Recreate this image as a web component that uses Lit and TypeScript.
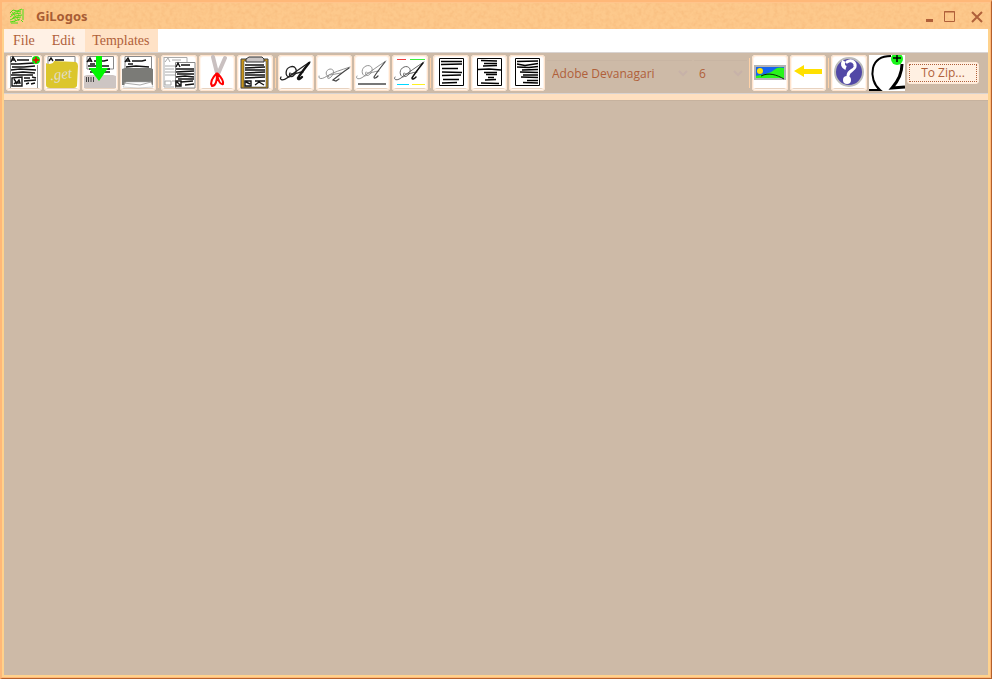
import { LitElement, html, css, svg, nothing } from "lit";
import { customElement, property } from "lit/decorators.js";

const CALLIGRAPHY = svg`
  <path class="thin" d="M3 22C1 25 5 26 9 23C16 18 24 12 32 7"/>
  <path class="thin" d="M11 22C7 21 7 14 12 12C17 10 20 15 17 19C14 23 10 22 12 18"/>
  <path class="thin" d="M13 19C17 20 20 17 25 17"/>
  <path class="stem" d="M31 8C27 13 23 18 20 23C20 25 22 24 24 22"/>`;

const PAGE_HEAD = svg`
  <path class="page" d="M5 1.500H31.500V14H5z"/>
  <path class="ink" d="M5 7L8 3L10 7M6 6H10M12 6H22L26 5M8 9L13 9"/>`;

const ICONS: Record<string, unknown> = {
  create: svg`
    <path class="white" d="M2 1H34V33H2z"/>
    <path class="hair" d="M4.500 33V1.500H26M31.500 10V33"/>
    <path class="ink" d="M5 7L7 2L10 7M6 5H9M11 5L23 5M5 9L12 9L28 8M6 12L18 12L29 11M5 15L14 14L30 15M6 18L17 17L29 18M5 20H27"/>
    <path class="ink" d="M6 23L16 22L16 31L6 31ZM8 24L10 27L8 29M10 29L13 25L14 28L11 28M18 23L24 23M26 22L30 23M18 26L30 25M20 29L23 28M25 29L29 28"/>
    <circle cx="30" cy="5" r="4" fill="#10e010"/><path d="M27 5H33M30 2V8" stroke="#f00000" stroke-width="1.5"/>`,
  open: svg`
    <path class="page" d="M4 1.500H31V12H4z"/>
    <path class="ink" d="M5 6L7 3L9 6M11 5H20"/>
    <path d="M2 8Q4 10 9 8L10 6L32 7Q34 8 34 11L33 31Q32 33 30 33H6Q2 33 2 30z" fill="#dcc62c"/>
    <text class="get" x="6" y="24" transform="rotate(-6 18 20)">.get</text>`,
  save: svg`
    ${PAGE_HEAD}
    <path class="ink" d="M6 11H27M7 14H28M8 17H28"/>
    <path d="M2 21L5 20H31L34 21V33H2z" fill="#cdc5c3"/>
    <path d="M4.500 22V27M6.500 22V27M9 22V27M11.500 22V27" stroke="#444"/>
    <path d="M14 1H20V13H26L17 26L7 13H14z" fill="#00f500"/>`,
  print: svg`
    ${PAGE_HEAD}
    <path class="ink" d="M6 12L16 11L29 12"/>
    <path d="M2 14L5 13H30L33 14V30H2z" fill="#7b7b77"/>
    <path d="M6 27H31L33 32Q18 34 3 32z" fill="#fff" stroke="#aaa" stroke-width=".5"/>
    <path d="M4 28L20 30L31 27" class="faint"/>`,
  copy: svg`
    <path class="faint" d="M3 2.500H26V7M3 2V32H13M4 7L7 3L9 7M11 5H20M4 11H14M4 14H13M4 17H14M4 20H14M4 26H10V30H4zM11 26H14"/>
    <path class="page" d="M14.500 7.500H34V33H14.500z"/>
    <path class="ink" d="M15 12L17 8L19 12M20 10H29M15 14H33M15 17L33 16M16 19L33 19M15 22L24 21L33 22M17 24H33M20 27L32 26M24 30L33 29M15 26L20 26V31L15 31zM16 27L19 30"/>`,
  cut: svg`
    <path d="M14 2L18 18M26 3L19 19" stroke="#c9c0c0" stroke-width="4" stroke-linecap="round" fill="none"/>
    <path d="M18 18C13 23 11 28 13 31C17 31 18 25 18 19C19 25 21 30 24 29C25 25 21 21 18 18" stroke="#f00" stroke-width="2" fill="none"/>`,
  paste: svg`
    <path d="M4 4H31V33H4z" fill="#c8951a" stroke="#444"/>
    <path d="M7 6H29V32H7z" fill="#fff" stroke="#333" stroke-width=".5"/>
    <path class="ink" d="M8 10H27M8 13L28 12M8 15H28M8 18L28 17M8 20H28M8 23L28 22M18 26H28M8 26H14V31H8zM9 27L13 29M18 30L22 27L27 30"/>
    <path d="M12 2H25L27 4V7H9V4z" fill="#c9c5c5" stroke="#333"/>`,
  bold: svg`<g class="heavy">${CALLIGRAPHY}</g>`,
  italic: svg`<g class="light" transform="translate(0 4)">
    <path class="thin" d="M3 17C2 21 7 20 11 17C18 13 25 11 34 8"/>
    <path class="thin" d="M13 18C9 17 9 11 14 10C19 10 18 15 15 18C12 21 10 19 13 16M14 16L25 14"/>
    <path class="stem" d="M33 9C27 13 22 17 17 21L20 22L23 20"/></g>`,
  underline: svg`<g class="light" transform="translate(0 -1)">${CALLIGRAPHY}</g><path d="M4 29H32" stroke="#777" stroke-width="2"/>`,
  color: svg`<g class="normal">${CALLIGRAPHY}</g>
    <path d="M5 4.500H14" stroke="#f04040"/><path d="M18 4.500H33" stroke="#40f040"/>
    <path d="M5 29.500H17" stroke="#00d8ff"/><path d="M20 29.500H33" stroke="#fff020"/>`,
  left: svg`<path class="frame" d="M6.500 3.500H30.500V30.500H6.500z"/>
    <path class="row" d="M8 6.500H29M8 9.500L29 9M9 13.500H25M9 17L29 17.500M9 20.500L28 20M10 24.500H26M9 28L24 27.500"/>`,
  center: svg`<path class="frame" d="M6.500 3.500H30.500V30.500H6.500z"/>
    <path class="row" d="M10 5.500L26 6M13 8.500H26M12 11L26 10.500M7 14.500L18 14L30 15M13 17.500H26M15 19.500H26M17 22.500H23M14 25L25 24.500M10 28L28 28.500"/>`,
  right: svg`<path class="frame" d="M6.500 3.500H30.500V30.500H6.500z"/>
    <path class="row" d="M8 6.500L29 6M8 9L16 10.500L29 8.500M8 12L20 12.500L29 11.500M13 15L29 14.500M11 17L29 17.500M14 20H29M12 22L29 22.500M18 25.500H29M14 27.500L29 28"/>`,
  image: svg`
    <path d="M3 11H33V24H3z" fill="#1464ef" stroke="#b4b4b4" stroke-width="2"/>
    <circle cx="8" cy="16" r="3" fill="#ffe600"/>
    <path d="M4 23V21C12 19 18 19 22 15C25 12 29 12 32 13V23z" fill="#29f51b"/>
    <path d="M9 21C17 17 25 20 32 24" stroke="#062506" fill="none"/>`,
  back: svg`<path d="M4 16L14 10V14H32V19H14V22z" fill="#ffe000"/>`,
  help: svg`
    <circle cx="18" cy="17" r="14" fill="#5148a6" stroke="#bbb" stroke-width="2"/>
    <path d="M16 7C20 4 25 7 24 12C23 16 17 15 17 21" stroke="#fff" stroke-width="3" fill="none" stroke-linecap="round"/>
    <path d="M13 6C11 9 12 12 15 13" stroke="#fff" stroke-width="4" fill="none"/>
    <circle cx="16" cy="25" r="4" fill="#fff"/>`,
  symbol: svg`
    <path class="white" d="M0 0H36V36H0z"/>
    <path d="M0 35L11 35C5 30 2 21 4 13C6 5 12 1 22 1" stroke="#000" stroke-width="2" fill="none"/>
    <path d="M33 9C33 18 30 25 23 33L36 32" stroke="#000" stroke-width="3" fill="none"/>
    <circle cx="28" cy="4" r="6" fill="#19f51b"/><path d="M24 3H32M28 0V7" stroke="#000" stroke-width="1.5"/>`,
};

const GROUPS: [string, string][][] = [
  [["create", "New"], ["open", "Open"], ["save", "Save"], ["print", "Print"]],
  [["copy", "Copy"], ["cut", "Cut"], ["paste", "Paste"]],
  [["bold", "Bold"], ["italic", "Italic"], ["underline", "Underline"], ["color", "Color"]],
  [["left", "Align left"], ["center", "Align center"], ["right", "Align right"]],
];

@customElement("tool-button")
class ToolButton extends LitElement {
  @property() icon = "";
  @property() name = "";
  @property({ type: Boolean }) flat = false;

  static styles = css`
    :host { display: block; flex: none; }
    button {
      display: block; width: 36px; height: 36px; padding: 0; box-sizing: border-box;
      border: 0; border-radius: 4px; overflow: hidden;
      background: linear-gradient(#fff 33px, #e8d2bf 33px, #e8d2bf 34px, #fff 34px);
    }
    .framed { box-shadow: inset 0 0 0 1px #ffe3cc, inset 0 0 0 2px #fff6ee; }
    .flat { border-radius: 0; }
    svg { display: block; width: 36px; height: 36px; }
    .white { fill: #fff; }
    .page { fill: #fff; stroke: #888; stroke-width: 1; }
    .hair { fill: none; stroke: #888; stroke-width: 1; }
    .faint { fill: none; stroke: #aaa; stroke-width: 1; }
    .ink { fill: none; stroke: #111; stroke-width: 1.4; }
    .row { fill: none; stroke: #000; stroke-width: 1.4; }
    .frame { fill: #fff; stroke: #000; }
    .thin, .stem { fill: none; stroke-linecap: round; }
    .heavy .thin { stroke: #222; stroke-width: 1.3; }
    .heavy .stem { stroke: #111; stroke-width: 2.4; }
    .normal .thin { stroke: #555; stroke-width: 0.9; }
    .normal .stem { stroke: #111; stroke-width: 1.5; }
    .light .thin { stroke: #888; stroke-width: 0.9; }
    .light .stem { stroke: #444; stroke-width: 1.2; }
    .get { font: italic 15px "Liberation Serif", serif; fill: #e0dcca; }
  `;

  render() {
    return html`<button class=${this.flat ? "flat" : "framed"} aria-label=${this.name}>
      <svg viewBox="0 0 36 36" aria-hidden="true">${ICONS[this.icon] ?? nothing}</svg>
    </button>`;
  }
}

@customElement("app-root")
class AppRoot extends LitElement {
  static styles = css`
    :host { display: block; color: #b0603a; font-family: "Open Sans", "Noto Sans", sans-serif; font-size: 12px; }
    * { box-sizing: border-box; }
    button, select { font: inherit; color: inherit; }
    .window {
      display: flex; flex-direction: column; min-height: 100vh;
      border: solid; border-width: 2px 1px 1px 2px;
      border-color: #ffb878 #b4602c #b4602c #ffb878; background: #ffb878;
      padding: 0 1px 1px 0;
    }
    .inner { flex: 1; display: flex; flex-direction: column; background: #ffd28c; padding: 0 2px 2px; }
    .title { position: relative; display: flex; align-items: center; height: 27px; background: #fdc98c; margin: 0 -2px; padding: 0 3px 0 7px; border-top: 1px solid #ffc48c; }
    .grain { position: absolute; inset: 0; width: 100%; height: 100%; opacity: 0.4; }
    .logo { position: relative; width: 16px; height: 16px; margin-right: 11px; }
    h1 { position: relative; flex: 1; margin: 0; font: 700 13px/20px "Noto Sans", sans-serif; color: #a85c34; }
    .controls { position: relative; display: flex; gap: 6px; }
    .controls button { width: 20px; height: 20px; padding: 0; border: 0; background: none; }
    .controls svg { display: block; width: 20px; height: 20px; }
    .menubar { display: flex; height: 23px; background: #fff; }
    nav { display: flex; gap: 3px; padding-left: 2px; background: #fff1e5; }
    nav button { border: 0; padding: 0 7px; background: none; font: 14px/22px "Liberation Serif", serif; }
    nav .active { padding-right: 9px; background: #ffe2c6; }
    .toolbar {
      display: flex; align-items: center; gap: 2px; height: 42px; padding-left: 2px;
      background: #cdbaa7; border: solid #d9d4d2; border-width: 1px 0;
    }
    .sep { flex: none; width: 1px; height: 30px; background: #ffd2a8; }
    .combo { position: relative; height: 26px; border-top: 1px solid #c8b5a3; }
    .combo select {
      display: block; width: 100%; height: 24px; appearance: none; border: 0; padding: 0 5px;
      background: none; opacity: 1;
    }
    .combo svg { position: absolute; right: 4px; top: 8px; width: 10px; height: 8px; pointer-events: none; }
    .family { width: 145px; }
    .size { width: 53px; }
    .zip {
      width: 72px; height: 22px; padding: 1px; border: 1px solid #ffe9d6; border-radius: 3px; background: #fff0e2;
    }
    .zip span { display: block; border: 1px dotted #b0603a; line-height: 16px; }
    .strip { height: 6px; background: #ffe0c0; }
    main { flex: 1; background: #cdbaa7; border-top: 1px solid #c6b29e; }
  `;

  private combo(cls: string, label: string, value: string) {
    return html`<div class="combo ${cls}">
      <select aria-label=${label} disabled><option>${value}</option></select>
      <svg viewBox="0 0 10 8" aria-hidden="true"><path d="M1 2L5 6L9 2" fill="none" stroke="#c7b2a8" stroke-width="2"/></svg>
    </div>`;
  }

  render() {
    const sep = html`<span class="sep"></span>`;
    return html`<div class="window"><div class="inner">
      <header class="title">
        <svg class="grain" aria-hidden="true">
          <filter id="grain" x="0" y="0" width="1" height="1" color-interpolation-filters="sRGB">
            <feTurbulence type="fractalNoise" baseFrequency="0.25" numOctaves="2" seed="4"/>
            <feColorMatrix values="0 0 0 0 0.92  0 0 0 0 0.62  0 0 0 0 0.36  0 0 0 1.2 -0.45"/></filter>
          <rect width="100%" height="100%" filter="url(#grain)"/>
        </svg>
        <svg class="logo" viewBox="0 0 16 16" aria-hidden="true">
          <g fill="none" stroke="#4ce014">
            <path d="M1 5L4 2L8 3L13 1M2 7L6 4L12 3M14 1V12M1 9L5 6L12 5M3 11L7 8L13 7M1 12L5 10L12 9M1 14L6 13L11 11M2 15H9M12 12L14 14"/>
            <path d="M3 4L6 7L4 10L7 12L5 14M8 4L10 7L8 10L10 13" stroke-width=".7"/>
          </g>
        </svg>
        <h1>GiLogos</h1>
        <div class="controls">
          <button aria-label="Minimize"><svg viewBox="0 0 20 20"><path d="M11 14.500H18" stroke="#b0603a" stroke-width="3"/></svg></button>
          <button aria-label="Maximize"><svg viewBox="0 0 20 20"><path d="M3.500 5.500H13.500V15.500H3.500zM3 6H14" fill="none" stroke="#b0603a"/></svg></button>
          <button aria-label="Close"><svg viewBox="0 0 20 20"><path d="M5 6L15 16M15 6L5 16" stroke="#b0603a" stroke-width="2"/></svg></button>
        </div>
      </header>
      <div class="menubar"><nav>
        <button>File</button><button>Edit</button><button class="active">Templates</button>
      </nav></div>
      <div class="toolbar" role="toolbar">
        ${GROUPS.map((group, i) => html`${i ? sep : nothing}${group.map(
          ([icon, name]) => html`<tool-button icon=${icon} name=${name}></tool-button>`)}`)}
        ${this.combo("family", "Font", "Adobe Devanagari")}
        ${this.combo("size", "Font size", "6")}
        ${sep}
        <tool-button icon="image" name="Insert image"></tool-button>
        <tool-button icon="back" name="Back"></tool-button>
        ${sep}
        <tool-button icon="help" name="Help"></tool-button>
        <tool-button icon="symbol" name="Insert symbol" flat></tool-button>
        <button class="zip"><span>To Zip...</span></button>
      </div>
      <div class="strip"></div>
      <main></main>
    </div></div>`;
  }
}
